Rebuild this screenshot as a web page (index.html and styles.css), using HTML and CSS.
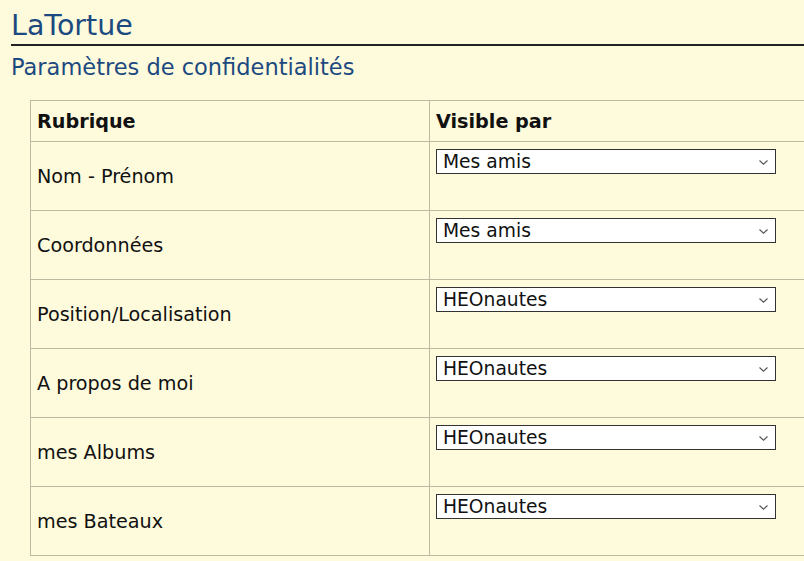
FILE: index.html
```html
<!DOCTYPE html>
<html lang="fr">
<head>
<meta charset="utf-8">
<title>LaTortue</title>
<link rel="stylesheet" href="styles.css">
</head>
<body>
<h1 class="site-title">LaTortue</h1>
<h2 class="page-title">Paramètres de confidentialités</h2>
<table class="privacy">
  <thead>
    <tr class="head-row"><th class="col-label">Rubrique</th><th class="col-value">Visible par</th></tr>
  </thead>
  <tbody>
    <tr><td class="label">Nom - Prénom</td><td class="value"><div class="select-wrap"><select class="vis"><option>Mes amis</option><option>HEOnautes</option></select><svg class="chev" width="9" height="5" viewBox="0 0 9 5"><path d="M0.5 0.5 L4.5 4.2 L8.5 0.5" fill="none" stroke="#555" stroke-width="1.1"/></svg></div></td></tr>
    <tr><td class="label">Coordonnées</td><td class="value"><div class="select-wrap"><select class="vis"><option>Mes amis</option><option>HEOnautes</option></select><svg class="chev" width="9" height="5" viewBox="0 0 9 5"><path d="M0.5 0.5 L4.5 4.2 L8.5 0.5" fill="none" stroke="#555" stroke-width="1.1"/></svg></div></td></tr>
    <tr><td class="label">Position/Localisation</td><td class="value"><div class="select-wrap"><select class="vis"><option>HEOnautes</option><option>Mes amis</option></select><svg class="chev" width="9" height="5" viewBox="0 0 9 5"><path d="M0.5 0.5 L4.5 4.2 L8.5 0.5" fill="none" stroke="#555" stroke-width="1.1"/></svg></div></td></tr>
    <tr><td class="label">A propos de moi</td><td class="value"><div class="select-wrap"><select class="vis"><option>HEOnautes</option><option>Mes amis</option></select><svg class="chev" width="9" height="5" viewBox="0 0 9 5"><path d="M0.5 0.5 L4.5 4.2 L8.5 0.5" fill="none" stroke="#555" stroke-width="1.1"/></svg></div></td></tr>
    <tr><td class="label">mes Albums</td><td class="value"><div class="select-wrap"><select class="vis"><option>HEOnautes</option><option>Mes amis</option></select><svg class="chev" width="9" height="5" viewBox="0 0 9 5"><path d="M0.5 0.5 L4.5 4.2 L8.5 0.5" fill="none" stroke="#555" stroke-width="1.1"/></svg></div></td></tr>
    <tr><td class="label">mes Bateaux</td><td class="value"><div class="select-wrap"><select class="vis"><option>HEOnautes</option><option>Mes amis</option></select><svg class="chev" width="9" height="5" viewBox="0 0 9 5"><path d="M0.5 0.5 L4.5 4.2 L8.5 0.5" fill="none" stroke="#555" stroke-width="1.1"/></svg></div></td></tr>
  </tbody>
</table>
</body>
</html>
```
FILE: styles.css
```css
html, body {
  margin: 0;
  padding: 0;
  overflow: hidden;
}
body {
  background: #fefadc;
  font-family: "DejaVu Sans", Verdana, sans-serif;
  color: #111;
}
.site-title {
  margin: 9px 0 0 11px;
  padding: 0 0 2px 0;
  font-size: 28.5px;
  font-weight: normal;
  line-height: normal;
  color: #1c4a80;
  border-bottom: 2px solid #222;
}
.page-title {
  margin: 8px 0 0 11px;
  font-size: 22.5px;
  font-weight: normal;
  line-height: normal;
  color: #1c4a80;
}
.privacy {
  margin: 20px 0 0 30px;
  border-collapse: collapse;
  width: 820px;
  font-size: 19.2px;
}
.privacy th, .privacy td {
  border: 1px solid #bdb9a2;
  padding: 0 6px;
  text-align: left;
}
.head-row th {
  height: 40px;
  font-weight: bold;
  vertical-align: middle;
}
.col-label {
  width: 386px;
}
.privacy td {
  height: 61px;
}
.label {
  vertical-align: middle;
}
.value {
  vertical-align: top;
  padding-top: 7px !important;
}
.select-wrap {
  position: relative;
  width: 340px;
}
.vis {
  appearance: none;
  -webkit-appearance: none;
  display: block;
  width: 340px;
  height: 25px;
  margin: 0;
  padding: 0 20px 0 6px;
  border: 1px solid #333;
  border-radius: 0;
  background: #fff;
  font-family: "DejaVu Sans", Verdana, sans-serif;
  font-size: 18.7px;
  color: #111;
  line-height: 23px;
}
.chev {
  position: absolute;
  right: 8px;
  top: 11px;
  pointer-events: none;
}
```
